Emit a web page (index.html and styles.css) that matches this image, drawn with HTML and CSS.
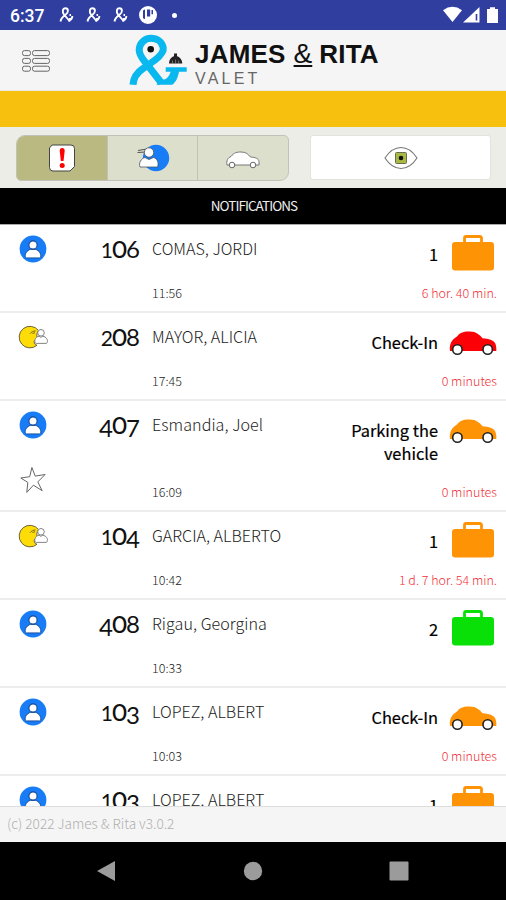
FILE: index.html
```html
<!DOCTYPE html>
<html lang="en">
<head>
<meta charset="utf-8">
<title>James &amp; Rita Valet</title>
<link rel="stylesheet" href="styles.css">
</head>
<body>
<svg class="defs" aria-hidden="true">
  <symbol id="user" viewBox="0 0 28 28">
    <circle cx="14" cy="14" r="13.4" fill="#177cf5"/>
    <path d="M6.300 22c-.5-3.400 1.600-6.600 5.100-7.600h5.200c3.500 1 5.600 4.200 5.100 7.600-.1.600-.6.900-1.200.9h-13c-.6 0-1.100-.3-1.200-.9z" fill="#fff" stroke="#164a96" stroke-width=".9"/>
    <circle cx="14" cy="10" r="4.100" fill="#fff" stroke="#164a96" stroke-width="1.100"/>
  </symbol>
  <symbol id="moon" viewBox="0 0 30 24">
    <path d="M20.500 5.500A10.800 10.800 0 1 0 19 20.300c-2.700-.8-3.500-3-2.400-4.800.7-1.100 2-1.800 3.300-2-1.600-1.700-1.500-5 .6-8z" fill="#fedc08" stroke="#5c5432" stroke-width=".9"/>
    <path d="M12 8.700c1.500-1.800 3-2.500 5.500-2.800M14.500 8.500l2.500-.8" fill="none" stroke="#655820" stroke-width=".9"/>
    <circle cx="23" cy="7.800" r="3.300" fill="#fff" stroke="#777" stroke-width=".9"/>
    <path d="M17 17.500c-.7-3.200 1-5.800 4-6.200l1.800 1 2-1c3.400.3 5.400 3.500 4.400 6.200-.2.600-.6.900-1.200.9H18.200c-.6 0-1-.3-1.200-.9z" fill="#fff" stroke="#777" stroke-width=".9"/>
  </symbol>
  <symbol id="star" viewBox="0 0 28 28">
    <path d="M12.900 1.500l3.300 8.600 9.900-1.600-7.300 7.400 4.400 8.800-8.800-5.500-6.600 7.200 1-10L1.800 12l8.900-1.300z" fill="#fff" stroke="#666" stroke-width="1"/>
  </symbol>
  <symbol id="bag" viewBox="0 0 42 36">
    <path d="M12.500 8V3a1.500 1.500 0 0 1 1.500-1.500h14A1.500 1.500 0 0 1 29.500 3v5" fill="none" stroke="currentColor" stroke-width="2.800"/>
    <rect x="0" y="7" width="42" height="28.500" rx="3.200" fill="currentColor"/>
  </symbol>
  <symbol id="car" viewBox="0 0 48 24">
    <path d="M1 20C0 13 3 8.500 8 5.500 12 .5 16 .5 21 .5c6 0 10 3.500 12.500 6.700 6.500.3 11 1.800 12.800 5.300.9 2.300 1.200 5 1 7.500z" fill="currentColor"/>
    <circle cx="8.400" cy="18.500" r="4.700" fill="#fff" stroke="#222" stroke-width="1.600"/>
    <circle cx="38.700" cy="18.500" r="4.700" fill="#fff" stroke="#222" stroke-width="1.600"/>
  </symbol>
  <symbol id="ribbon" viewBox="0 0 18 18">
    <path d="M2.500 15.500C3 12 5 10.500 7.500 8.800 11 6.500 10.500 2.200 7.500 2.200S4 6 6 8.500l6 7M10 14.500c3 0 4-2 4.500-4.500M11.500 9h1.500M12 12v3" fill="none" stroke="#fff" stroke-width="1.900"/>
  </symbol>
</svg>
<div class="screen">
  <header class="status">
    <span class="clock">6:37</span>
    <svg class="rib"><use href="#ribbon"/></svg>
    <svg class="rib"><use href="#ribbon"/></svg>
    <svg class="rib"><use href="#ribbon"/></svg>
    <svg class="disc" viewBox="0 0 18 18"><circle cx="9" cy="9" r="9" fill="#fff"/><path d="M4 4.500q1.200-1 2-1v9.500q-1.200 0-2-1zM8 3.500h3.200v7H8z" fill="#303f9f"/><path d="M12.500 4h1.500v4.200h-1.500z" fill="#303f9f"/></svg>
    <span class="more"></span>
    <svg class="signals" viewBox="0 0 56 18">
      <path d="M0 4.200Q9.500-2.500 19 4.200L9.500 16z" fill="#fff"/>
      <path d="M20 16.500L36.500 1v15.500z" fill="#fff"/><path d="M33.500 8v6.500" stroke="#303f9f" stroke-width="1.600"/>
      <path d="M44 3h3V1.200h5V3h3v14H44z" fill="#fff"/>
    </svg>
  </header>
  <div class="brand">
    <svg class="menu" viewBox="0 0 28 22" fill="none" stroke="#666" stroke-width="1">
      <rect x=".5" y=".6" width="8" height="5" rx="2"/><rect x="10.500" y=".6" width="17" height="5" rx="2"/>
      <rect x=".5" y="8.400" width="8" height="5" rx="2"/><rect x="10.500" y="8.400" width="17" height="5" rx="2"/>
      <rect x=".5" y="16.200" width="8" height="5" rx="2"/><rect x="10.500" y="16.200" width="17" height="5" rx="2"/>
    </svg>
    <svg class="mark" viewBox="0 0 60 52">
      <path d="M5 50.700C5.500 43.500 9 38.500 15 34.500L27 26C33.500 21 36 17.500 35.200 13.500 34 8 29 4.200 23 4.200 16.500 4.200 11.200 9.500 11.200 16c0 4 2.300 7.500 5.500 11.500L33.500 49" fill="none" stroke="#08b8ee" stroke-width="7"/>
      <path d="M37.700 33.300h21v4.400H51C50 43 48.500 47.500 44.300 50.700H28.500L31 45.500h5.500q4-1.500 6.200-7.800h-5z" fill="#08b8ee"/>
      <circle cx="22.700" cy="15.300" r="3.300" fill="#111"/>
      <path d="M41 29.500c.3-4.500 2.500-6.500 5-7.200V19.500h3v2.800c2.500.7 5 2.700 5.300 7.200z" fill="#222"/>
      <path d="M44.500 29.500v-3M47.600 29.500v-4M50.700 29.500v-3" stroke="#aaa" stroke-width=".6"/>
    </svg>
    <div class="words">
      <div class="title"><span>JAMES</span><span class="amp">&amp;</span><span>RITA</span></div>
      <div class="sub">VALET</div>
    </div>
  </div>
  <div class="banner"></div>
  <nav class="tools">
    <div class="tabs">
      <div class="tab on"><svg class="alert" viewBox="0 0 28 28"><path d="M4 1h19q3.500 0 3.500 3.500v18L22 27H5q-3.500 0-3.500-3.500V4z" fill="#fff" stroke="#444" stroke-width="1"/><path d="M11.700 7q0-3 2.500-3t2.500 3l-1.200 10h-2.600z" fill="#f00"/><circle cx="14.200" cy="21.500" r="2.500" fill="#f00"/></svg></div>
      <div class="tab"><svg class="guest" viewBox="0 0 34 28"><circle cx="20" cy="14" r="13.200" fill="#177cf5"/><path d="M2 6.500l9-1.500M1.500 8.500l8-.5" stroke="#555" stroke-width="1.200"/><circle cx="13" cy="8.500" r="4.700" fill="#fff" stroke="#456" stroke-width=".8"/><path d="M4 23c-1.500-4 1-8.500 5-9.500l4 2 4.500-2c4 1 5.500 5.500 4 9.500z" fill="#fff" stroke="#456" stroke-width=".8"/></svg></div>
      <div class="tab"><svg class="auto" viewBox="0 0 34 18"><path d="M1 14c-1-4 1-7.500 4-8.500C8 1.500 11 1 15 1c5 0 7 2 9.500 5 5 .3 8 1.500 8.500 4.500V14z" fill="#fff" stroke="#777" stroke-width="1"/><circle cx="6" cy="14" r="2.800" fill="#fff" stroke="#666" stroke-width="1"/><circle cx="27" cy="14" r="2.800" fill="#fff" stroke="#666" stroke-width="1"/></svg></div>
    </div>
    <div class="watch"><svg class="eye" viewBox="0 0 34 24"><path d="M1 12C10-2 24-2 33 12 24 26 10 26 1 12z" fill="#fff" stroke="#777" stroke-width="1.100"/><rect x="11.500" y="6.500" width="11" height="11" rx="1" fill="#a9b944" stroke="#6a6d50"/><circle cx="17" cy="12" r="2.300" fill="#111"/></svg></div>
  </nav>
  <h1 class="heading">NOTIFICATIONS</h1>
  <main class="list">
    <article class="row">
      <div class="flags"><svg class="user"><use href="#user"/></svg></div>
      <div class="room">1<span class="o">0</span><span class="up">6</span></div><div class="guestname">COMAS, JORDI</div>
      <div class="task">1</div><div class="kind orange"><svg class="bag"><use href="#bag"/></svg></div>
      <div class="time">11:56</div><div class="wait">6 hor. 40 min.</div>
    </article>
    <article class="row">
      <div class="flags"><svg class="moon"><use href="#moon"/></svg></div>
      <div class="room">2<span class="o">0</span><span class="up">8</span></div><div class="guestname">MAYOR, ALICIA</div>
      <div class="task">Check-In</div><div class="kind red"><svg class="car"><use href="#car"/></svg></div>
      <div class="time">17:45</div><div class="wait">0 minutes</div>
    </article>
    <article class="row tall">
      <div class="flags"><svg class="user"><use href="#user"/></svg><svg class="star"><use href="#star"/></svg></div>
      <div class="room"><span class="down">4</span><span class="o">0</span><span class="down">7</span></div><div class="guestname lower">Esmandia, Joel</div>
      <div class="task">Parking the vehicle</div><div class="kind orange"><svg class="car"><use href="#car"/></svg></div>
      <div class="time">16:09</div><div class="wait">0 minutes</div>
    </article>
    <article class="row">
      <div class="flags"><svg class="moon"><use href="#moon"/></svg></div>
      <div class="room">1<span class="o">0</span><span class="down">4</span></div><div class="guestname">GARCIA, ALBERTO</div>
      <div class="task">1</div><div class="kind orange"><svg class="bag"><use href="#bag"/></svg></div>
      <div class="time">10:42</div><div class="wait">1 d. 7 hor. 54 min.</div>
    </article>
    <article class="row">
      <div class="flags"><svg class="user"><use href="#user"/></svg></div>
      <div class="room"><span class="down">4</span><span class="o">0</span><span class="up">8</span></div><div class="guestname lower">Rigau, Georgina</div>
      <div class="task">2</div><div class="kind green"><svg class="bag"><use href="#bag"/></svg></div>
      <div class="time">10:33</div><div class="wait"></div>
    </article>
    <article class="row">
      <div class="flags"><svg class="user"><use href="#user"/></svg></div>
      <div class="room">1<span class="o">0</span><span class="down">3</span></div><div class="guestname">LOPEZ, ALBERT</div>
      <div class="task">Check-In</div><div class="kind orange"><svg class="car"><use href="#car"/></svg></div>
      <div class="time">10:03</div><div class="wait">0 minutes</div>
    </article>
    <article class="row">
      <div class="flags"><svg class="user"><use href="#user"/></svg></div>
      <div class="room">1<span class="o">0</span><span class="down">3</span></div><div class="guestname">LOPEZ, ALBERT</div>
      <div class="task">1</div><div class="kind orange"><svg class="bag"><use href="#bag"/></svg></div>
    </article>
  </main>
  <footer class="foot">(c) 2022 James &amp; Rita v3.0.2</footer>
  <div class="navbar">
    <svg viewBox="0 0 20 20"><path d="M1 10L19 0v20z"/></svg>
    <svg viewBox="0 0 20 20"><circle cx="10" cy="10" r="9.200"/></svg>
    <svg viewBox="0 0 20 20"><rect x=".5" y=".5" width="19" height="19" rx="1"/></svg>
  </div>
</div>
</body>
</html>
```
FILE: styles.css
```css
* { box-sizing: border-box; }
body { margin: 0; font-family: "Noto Sans CJK SC", "Noto Sans", sans-serif; background: #000; }
svg { display: block; flex: none; }
.defs { width: 0; height: 0; position: absolute; }
.screen { width: 506px; height: 900px; display: flex; flex-direction: column; overflow: hidden; }

.status { height: 30px; flex: none; background: #303f9f; display: flex; align-items: center; padding: 0 7px 0 10px; }
.clock { font: 500 17.500px/30px Roboto, sans-serif; color: #fff; width: 48px; padding-top: 2px; }
.rib { width: 18px; height: 18px; margin-right: 9px; }
.disc { width: 18px; height: 18px; }
.more { width: 5px; height: 5px; border-radius: 50%; background: #fff; margin-left: 15px; }
.signals { width: 56px; height: 18px; margin-left: auto; }

.brand { height: 61px; flex: none; background: #f5f5f5; display: flex; align-items: flex-start; border-bottom: 1px solid #ece9df; }
.menu { width: 28px; height: 22px; margin: 20px 0 0 22px; }
.mark { width: 60px; height: 52px; margin: 4px 0 0 78px; }
.words { margin: 9px 0 0 7px; }
.title { display: flex; font: bold 26px/30px "Liberation Sans", sans-serif; letter-spacing: .2px; color: #111; }
.title .amp { font-weight: normal; margin: 0 7px 0 8px; font-size: 28px; letter-spacing: 0; text-decoration: underline; text-decoration-thickness: 1.500px; text-underline-offset: 2px; }
.sub { font: 16px/18px "Liberation Sans", sans-serif; letter-spacing: 3.200px; color: #666; margin-top: 1px; }
.banner { height: 36px; flex: none; background: #f8c00e; }

.tools { height: 61px; flex: none; background: #ecede7; display: flex; align-items: flex-start; padding: 8px 15px 0 16px; justify-content: space-between; }
.tabs { display: flex; width: 273px; height: 46px; border: 1px solid #c2c3b8; border-radius: 9px 5px 9px 5px; overflow: hidden; background: #dddfcd; }
.tab { flex: 1; display: flex; align-items: center; justify-content: center; border-left: 1px solid #c2c3b8; }
.tab:first-child { border-left: 0; }
.tab.on { background: #b9b981; }
.alert { width: 28px; height: 28px; }
.guest { width: 34px; height: 28px; }
.auto { width: 34px; height: 18px; margin-top: 3px; }
.watch { width: 181px; height: 45px; background: #fff; border: 1px solid #e2e3dd; border-radius: 3px; display: flex; align-items: center; justify-content: center; }
.eye { width: 34px; height: 24px; }

.heading { margin: 0; height: 37px; flex: none; background: #000; color: #eee; text-align: center; font-size: 13.500px; font-weight: 400; line-height: 35px; letter-spacing: -.95px; border-bottom: 1px solid #aaa; padding-left: 2px; }
.list { flex: 1; min-height: 0; overflow: hidden; background: #fff; }
.row { height: 88px; border-bottom: 2px solid #ededed; display: grid; grid-template-columns: 66px 74px 1fr 130px 68px; grid-template-rows: 1fr 26px; padding-bottom: 5px; align-items: start; }
.row.tall { height: 111px; }
.flags { grid-row: 1 / 3; display: flex; flex-direction: column; align-items: center; padding-top: 10px; }
.user { width: 28px; height: 28px; }
.moon { width: 30px; height: 24px; margin-top: 2px; }
.star { width: 28px; height: 28px; margin-top: 27px; }
.room { font: 21px/28px Lato, sans-serif; font-variant-numeric: lining-nums; color: #111; display: flex; justify-content: flex-end; align-items: baseline; height: 36px; padding-top: 8px; }
.room .o { font-size: 28px; font-variant-numeric: oldstyle-nums; margin: 0 -1px; }
.room .up { font-size: 24px; }
.room .down { font-size: 24px; transform: translateY(3px); }
.guestname { font-size: 16.100px; font-weight: 300; line-height: 24px; color: #222; padding: 11px 0 0 12px; white-space: nowrap; }
.guestname.lower { letter-spacing: .05px; }
.task { grid-column: 4; font-size: 16.400px; font-weight: 400; line-height: 23px; color: #000; text-align: right; padding: 18px 0 0 30px; -webkit-text-stroke: .2px #000; }
.kind { display: flex; justify-content: center; padding: 10px 0 0 2px; }
.bag { width: 42px; height: 36px; }
.car { width: 48px; height: 24px; margin-top: 8px; }
.orange { color: #ff9306; }
.red { color: #fb0006; }
.green { color: #08e008; }
.time { grid-column: 3; font-size: 12.500px; font-weight: 300; line-height: 26px; color: #222; padding-left: 12px; }
.wait { grid-column: 4 / 6; font-size: 12.500px; font-weight: 300; line-height: 26px; color: #f22f38; text-align: right; padding-right: 9px; }

.foot { height: 36px; flex: none; background: #f5f5f5; border-top: 1px solid #ddd; color: #b0b0b0; font-size: 13.600px; font-weight: 300; line-height: 32px; padding-left: 7px; }
.navbar { height: 58px; flex: none; background: #000; display: flex; justify-content: space-between; align-items: center; padding: 0 97px 0 96px; }
.navbar svg { width: 20px; height: 20px; fill: #9b9b9b; }
```
